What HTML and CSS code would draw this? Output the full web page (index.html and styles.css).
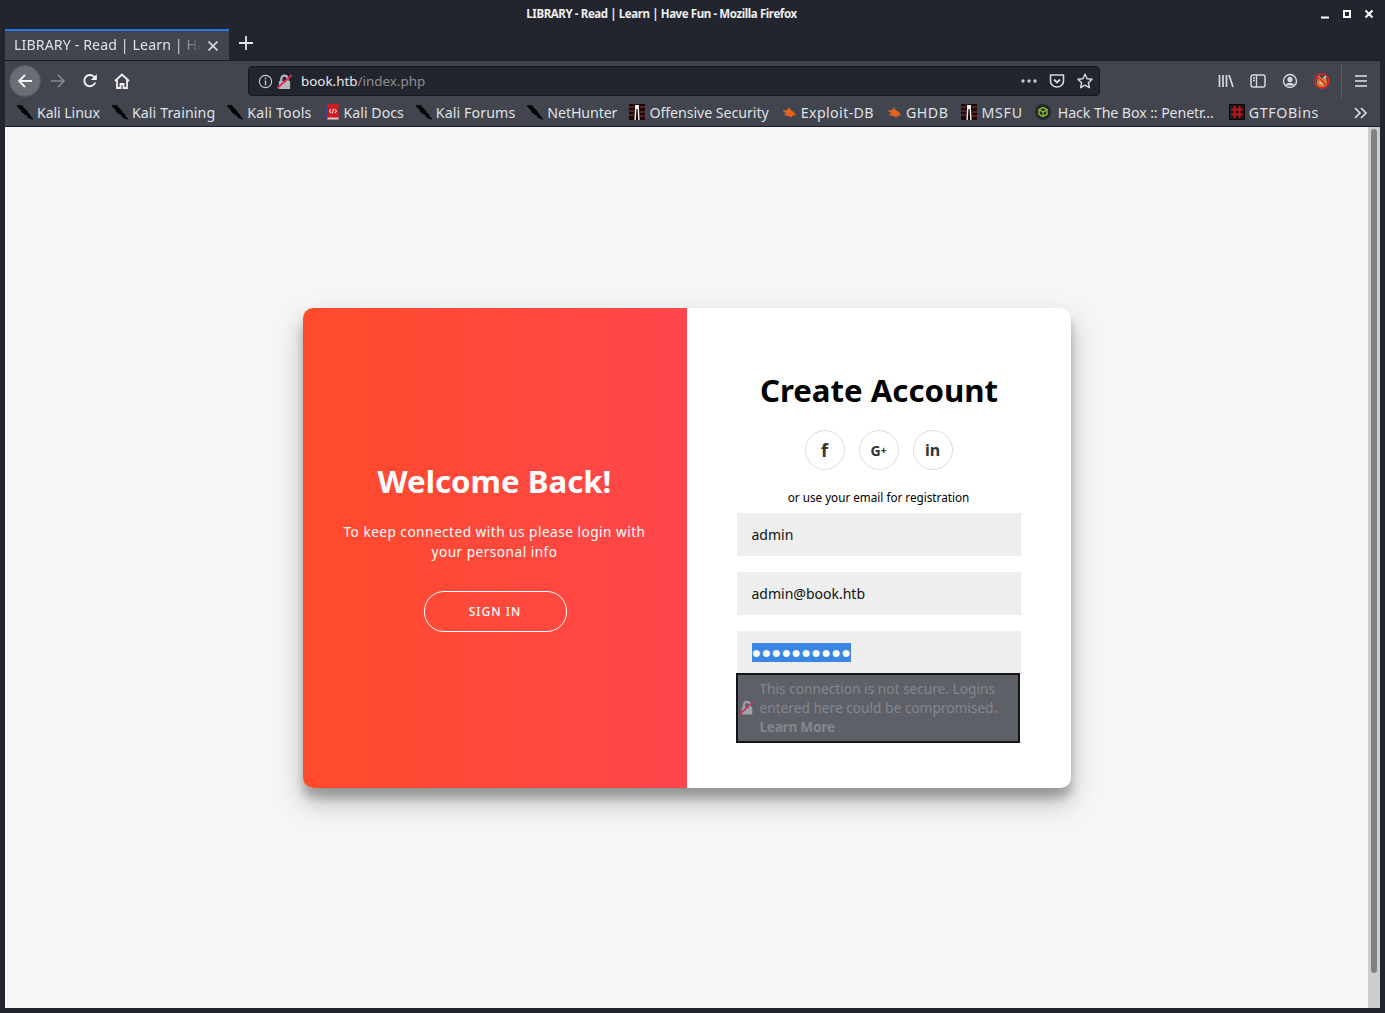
FILE: index.html
```html
<!DOCTYPE html>
<html lang="en">
<head>
<meta charset="utf-8">
<title>LIBRARY - Read | Learn | Have Fun</title>
<link rel="stylesheet" href="styles.css">
</head>
<body>
<svg class="defs" width="0" height="0" aria-hidden="true">
  <defs>
    <symbol id="dragon" viewBox="0 0 17 16">
      <path d="M0 2 L2 .6 L3 1.6 L5 .8 L6.8 3.2 L8.5 5.2 L10.500 6.6 L10.800 8.400 L13 10 L14.200 12.400 L17 15.600 L14.500 15 L11.600 13.600 L10.400 11.400 L8 10.400 L6.400 8.600 L5 8.200 L4.600 5.800 L2.600 4.600 L1.600 2.600 Z" fill="#050505" stroke="#050505" stroke-width=".8" stroke-linejoin="round"/>
    </symbol>
    <symbol id="bug" viewBox="0 0 16 16">
      <path d="M2 6.500 L6 6 L8 3.600 L9.800 6 L13 8 L14.800 11.600 L12 11.400 L10.400 13.600 L7.400 12 L4.600 11.400 L4.600 9 Z" fill="#e8601c"/>
      <path d="M2 6.500L5 8M3 11l3-1M7 3.600l2 3" stroke="#a8704a" stroke-width=".9"/>
    </symbol>
    <symbol id="offsec" viewBox="0 0 16 16">
      <rect width="16" height="16" fill="#1b0808"/>
      <path d="M0 3h5M0 7h5M0 11h5M11 3h5M11 8h5M11 12h5" stroke="#6d2a2a" stroke-width="1.300"/>
      <path d="M6 1h4v3l.6 12H9.200L8.600 5H7.400L6.800 16H5.400L6 4Z" fill="#f1eeee"/>
    </symbol>
    <symbol id="nolock" viewBox="0 0 16 16">
      <path d="M2 7.500h12V16H2Z" fill="#b7b8bd"/>
      <path d="M4.600 8V5a3.400 3.400 0 0 1 6.800 0V8" fill="none" stroke="#b7b8bd" stroke-width="2.400"/>
      <path d="M0 15.200 L16 1" stroke="#ea2351" stroke-width="2"/>
    </symbol>
  </defs>
</svg>

<div class="window">
  <header class="titlebar">
    <span class="title-text">LIBRARY - Read | Learn | Have Fun - Mozilla Firefox</span>
    <div class="wm-buttons">
      <svg class="wm" viewBox="0 0 10 10"><path d="M1 8.500h8" stroke="#fff" stroke-width="2"/></svg>
      <svg class="wm" viewBox="0 0 10 10"><path d="M2 2h6v6H2Z" fill="none" stroke="#fff" stroke-width="2"/></svg>
      <svg class="wm" viewBox="0 0 10 10"><path d="M1.500 1.500l7 7M8.500 1.500l-7 7" stroke="#fff" stroke-width="2"/></svg>
    </div>
  </header>

  <div class="tabbar">
    <div class="tab">
      <span class="tab-label">LIBRARY - Read | Learn | Have Fun</span>
      <svg class="tab-close" viewBox="0 0 10 10"><path d="M0.500 0.500l9 9M9.500 0.500l-9 9" stroke="#d9dade" stroke-width="1.600"/></svg>
    </div>
    <svg class="new-tab" viewBox="0 0 14 14"><path d="M7 0v14M0 7h14" stroke="#e6e7ea" stroke-width="1.800"/></svg>
  </div>

  <nav class="navbar">
    <div class="back-btn">
      <svg class="ico16" viewBox="0 0 16 16"><path d="M15 8H2M8 2L2 8l6 6" fill="none" stroke="#f4f4f6" stroke-width="1.800"/></svg>
    </div>
    <svg class="ico16 fwd" viewBox="0 0 16 16"><path d="M1 8h13M8 2l6 6-6 6" fill="none" stroke="#85878e" stroke-width="1.600"/></svg>
    <svg class="ico16 reload" viewBox="0 0 16 16"><path d="M13.200 9.500A5.600 5.600 0 1 1 11.800 3.600L14 6" fill="none" stroke="#f0f0f3" stroke-width="1.900"/><path d="M14.800 1v6h-6Z" fill="#f0f0f3"/></svg>
    <svg class="ico16 home" viewBox="0 0 16 16"><path d="M1 8l7-6.500L15 8M3 6.500V15h3.500v-4h3v4H13V6.500" fill="none" stroke="#f0f0f3" stroke-width="1.800"/></svg>
    <div class="urlbar">
      <svg class="ico-info" viewBox="0 0 16 16"><circle cx="8" cy="8" r="6.500" fill="none" stroke="#c9cacf" stroke-width="1.200"/><path d="M8 7v5M8 4v1.600" stroke="#c9cacf" stroke-width="1.500"/></svg>
      <svg class="ico-lock"><use href="#nolock"/></svg>
      <span class="url"><span class="url-host">book.htb</span><span class="url-path">/index.php</span></span>
      <svg class="url-dots" viewBox="0 0 16 4"><circle cx="2" cy="2" r="1.700" fill="#c9cacf"/><circle cx="8" cy="2" r="1.700" fill="#c9cacf"/><circle cx="14" cy="2" r="1.700" fill="#c9cacf"/></svg>
      <svg class="ico16 pocket" viewBox="0 0 16 16"><path d="M1.500 2h13v6a6.500 6 0 0 1-13 0Z" fill="none" stroke="#d7d8dc" stroke-width="1.600" stroke-linejoin="round"/><path d="M5 6.500l3 3 3-3" fill="none" stroke="#d7d8dc" stroke-width="1.800"/></svg>
      <svg class="ico16 star" viewBox="0 0 16 16"><path d="M8 1.200l2.100 4.500 4.900.6-3.600 3.400.9 4.900L8 12.200l-4.300 2.400.9-4.900L1 6.300l4.900-.6Z" fill="none" stroke="#d7d8dc" stroke-width="1.500" stroke-linejoin="round"/></svg>
    </div>
    <div class="nav-right">
      <svg class="ico16" viewBox="0 0 16 16"><path d="M1.500 2v12M5 2v12M8.500 2v12M11 2l4 12" fill="none" stroke="#d7d8dc" stroke-width="1.700"/></svg>
      <svg class="ico16" viewBox="0 0 16 16"><rect x="1" y="2" width="14" height="12" rx="2" fill="none" stroke="#d7d8dc" stroke-width="1.500"/><path d="M6.500 2v12M3 5h2M3 7.500h2" stroke="#d7d8dc" stroke-width="1.300"/></svg>
      <svg class="ico16" viewBox="0 0 16 16"><circle cx="8" cy="8" r="6.500" fill="none" stroke="#d7d8dc" stroke-width="1.400"/><circle cx="8" cy="6.400" r="2.600" fill="#d7d8dc"/><path d="M3.500 12.500a4.600 3.600 0 0 1 9 0Z" fill="#d7d8dc"/></svg>
      <svg class="ico16" viewBox="0 0 16 16"><path d="M3 7l2.500-4 2 2.500 4-2 1.500 4.500v4L10 14.500H6L3 12Z" fill="#d47f36"/><path d="M4 3.500l2 2M12 3l-2 2" stroke="#f0ece6" stroke-width="1.400"/><path d="M5.500 8.500l3 3" stroke="#f1d28a" stroke-width="1.500"/><circle cx="8" cy="8" r="6.900" fill="none" stroke="#e3262e" stroke-width="1.500"/><path d="M3 3l10 10" stroke="#e3262e" stroke-width="1.500"/></svg>
      <span class="nav-sep"></span>
      <svg class="ico16" viewBox="0 0 16 16"><path d="M2 3h12M2 8h12M2 13h12" stroke="#e2e3e6" stroke-width="1.700"/></svg>
    </div>
  </nav>

  <div class="bookmarks">
    <span class="bm ls-n1"><svg class="bm-ico"><use href="#dragon"/></svg>Kali Linux</span>
    <span class="bm ls-1"><svg class="bm-ico"><use href="#dragon"/></svg>Kali Training</span>
    <span class="bm ls-2"><svg class="bm-ico"><use href="#dragon"/></svg>Kali Tools</span>
    <span class="bm"><svg class="bm-ico" viewBox="0 0 16 16"><rect x="1.500" y="0" width="13" height="15.500" fill="#cf1b20"/><rect x="1.500" y="0" width="2" height="15.500" fill="#34458c"/><rect x="3.500" y="13.500" width="11" height="2" fill="#d9c9c4"/><path d="M7 5L5.500 7 7 9M11 5l1.500 2L11 9M9.700 4.500L8.300 9.500" fill="none" stroke="#fff" stroke-width="1"/></svg>Kali Docs</span>
    <span class="bm ls-1"><svg class="bm-ico"><use href="#dragon"/></svg>Kali Forums</span>
    <span class="bm ls-n1"><svg class="bm-ico"><use href="#dragon"/></svg>NetHunter</span>
    <span class="bm ls-n05"><svg class="bm-ico"><use href="#offsec"/></svg>Offensive Security</span>
    <span class="bm ls-4"><svg class="bm-ico"><use href="#bug"/></svg>Exploit-DB</span>
    <span class="bm ls-5"><svg class="bm-ico"><use href="#bug"/></svg>GHDB</span>
    <span class="bm ls-7 bm-msfu"><svg class="bm-ico"><use href="#offsec"/></svg>MSFU</span>
    <span class="bm bm-wide ls-n1"><svg class="bm-ico" viewBox="0 0 16 16"><circle cx="8" cy="8" r="8" fill="#1f2a2e"/><path d="M8 3.500l4 2.200v4.600l-4 2.200-4-2.200V5.700Z" fill="none" stroke="#9fcb1e" stroke-width="1.300"/><path d="M4.500 6L8 8l3.500-2M8 8v4.200" fill="none" stroke="#9fcb1e" stroke-width="1.100"/></svg>Hack The Box :: Penetr…</span>
    <span class="bm ls-6 bm-gtfo"><svg class="bm-ico" viewBox="0 0 16 16"><rect x="0.500" y="0.500" width="15" height="15" fill="#17181b" stroke="#05060a"/><path d="M5.500 2v12M10.500 2v12M2 5.500h12M2 10.500h12" stroke="#bb1717" stroke-width="2"/></svg>GTFOBins</span>
    <svg class="bm-more" viewBox="0 0 14 12"><path d="M1 1l5 5-5 5M7 1l5 5-5 5" fill="none" stroke="#e2e3e6" stroke-width="1.600"/></svg>
  </div>

  <div class="content-row">
    <main class="viewport">
      <section class="card">
        <div class="panel-left">
          <h1 class="h-welcome">Welcome Back!</h1>
          <p class="lead">To keep connected with us please login with your personal info</p>
          <button class="ghost-btn" type="button">SIGN IN</button>
        </div>
        <div class="panel-right">
          <h1 class="h-create">Create Account</h1>
          <div class="socials">
            <span class="social f">f</span>
            <span class="social g">G<small>+</small></span>
            <span class="social in">in</span>
          </div>
          <p class="or-line">or use your email for registration</p>
          <div class="field">admin</div>
          <div class="field">admin@book.htb</div>
          <div class="field field-pass"><span class="selected">●●●●●●●●●●</span></div>
          <div class="insecure">
            <svg class="insecure-ico"><use href="#nolock"/></svg>
            <div class="insecure-text">This connection is not secure. Logins entered here could be compromised. <b>Learn More</b></div>
          </div>
        </div>
      </section>
    </main>
    <div class="scrollbar"><div class="thumb"></div></div>
  </div>
</div>
</body>
</html>
```

FILE: styles.css
```css
* { box-sizing: border-box; }
html, body { margin: 0; padding: 0; height: 100%; overflow: hidden; background: #23252e; }
.defs { position: absolute; }
.window {
  height: 1013px; display: flex; flex-direction: column;
  font-family: "Noto Sans", "Open Sans", sans-serif; color: #eceef1;
  background: #23252e; padding: 0 5px 5px 5px;
}
.titlebar { height: 29px; flex: none; display: flex; align-items: center; justify-content: center; margin: 0 -5px; padding-bottom: 2px; position: relative; }
.title-text { font-size: 11.5px; font-weight: 700; color: #eef0f3; transform: translateX(-31px); letter-spacing: -0.4px; }
.wm-buttons { position: absolute; right: 11px; top: 9px; display: flex; gap: 12px; }
.wm { width: 10px; height: 10px; }

.tabbar { height: 31px; flex: none; display: flex; align-items: stretch; }
.tab {
  width: 224px; background: #42454e; border-top: 2px solid #2a76e8;
  display: flex; align-items: center; padding: 0 11px 3px 9px; font-size: 14.2px; letter-spacing: 0.1px;
}
.tab-label {
  flex: 1; white-space: nowrap; overflow: hidden; color: #dfe1e5;
  -webkit-mask-image: linear-gradient(to right, #000 85%, transparent);
  mask-image: linear-gradient(to right, #000 85%, transparent);
}
.tab-close { width: 10px; height: 10px; margin: 3px 0 0 6px; }
.new-tab { width: 14px; height: 14px; margin: 7px 0 0 10px; }

.navbar { height: 38px; flex: none; background: #42454e; border-top: 1px solid #1b1c23; display: flex; align-items: center; padding: 3px 0 0 4px; }
.back-btn { width: 32px; height: 32px; border-radius: 50%; background: #6b6d74; border: 1px solid #55575e; display: flex; align-items: center; justify-content: center; }
.ico16 { width: 16px; height: 16px; flex: none; }
.fwd { margin-left: 9px; }
.reload { margin-left: 16px; }
.home { margin-left: 16px; }
.urlbar {
  width: 852px; height: 30px; margin-left: 118px; background: #23252e; border: 1px solid #17181e;
  border-radius: 4px; display: flex; align-items: center; padding: 0 6px 0 9px; flex: none;
}
.ico-info { width: 15px; height: 15px; flex: none; }
.ico-lock { width: 15px; height: 15px; margin-left: 4px; flex: none; }
.url { font-size: 13.4px; margin-left: 9px; flex: 1; white-space: nowrap; }
.url-host { color: #e6e8ec; }
.url-path { color: #8d8f96; }
.url-dots { width: 16px; height: 4px; flex: none; }
.pocket { margin-left: 12px; }
.star { margin-left: 12px; }
.nav-right { flex: 1; display: flex; align-items: center; justify-content: flex-end; gap: 16px; padding-right: 11px; }
.nav-sep { width: 1px; height: 34px; background: #5d5f66; margin: 0 -5px; }

.bookmarks { height: 29px; flex: none; background: #42454e; display: flex; align-items: center; padding: 0 0 0 12px; gap: 12px; font-size: 14.2px; position: relative; border-bottom: 1px solid #1b1c23; }
.bm { display: inline-flex; align-items: center; color: #dfe1e5; white-space: nowrap; gap: 4px; }
.bm-wide { gap: 7px; }
.bm-msfu { margin-left: 1px; }
.bm-gtfo { margin-left: 3px; }
.ls-n1 { letter-spacing: -0.1px; }
.ls-n05 { letter-spacing: -0.05px; }
.ls-1 { letter-spacing: 0.1px; }
.ls-2 { letter-spacing: 0.2px; }
.ls-4 { letter-spacing: 0.4px; }
.ls-5 { letter-spacing: 0.5px; }
.ls-6 { letter-spacing: 0.65px; }
.ls-7 { letter-spacing: 0.75px; }
.bm-ico { width: 16px; height: 16px; flex: none; }
.bm-more { width: 14px; height: 12px; position: absolute; right: 12px; top: 9px; }

.content-row { flex: 1; display: flex; min-height: 0; }
.viewport { flex: 1; background: #f6f5f7; padding-top: 181px; display: flex; justify-content: center; align-items: flex-start; }
.scrollbar { width: 12px; flex: none; background: #cdcdcd; padding: 2px 3px 0; }
.thumb { height: 844px; background: #7f8284; border-radius: 3px; }

.card {
  width: 768px; height: 480px; display: flex; background: #fff; border-radius: 10px;
  box-shadow: 0 14px 28px rgba(0,0,0,.25), 0 10px 10px rgba(0,0,0,.22);
  position: relative; font-family: "Noto Sans", sans-serif; color: #000;
}
.panel-left {
  width: 384px; border-radius: 10px 0 0 10px; color: #fff; text-align: center;
  background: linear-gradient(to right, #ff4b2b, #ff464c);
  display: flex; flex-direction: column; align-items: center; justify-content: center; padding: 0 30px 3px;
}
.h-welcome { font-size: 31.2px; line-height: 38px; margin: 0; font-weight: 700; }
.lead { font-size: 13.6px; line-height: 20px; letter-spacing: .5px; margin: 22px 0 29px; font-weight: 400; }
.ghost-btn {
  width: 143px; height: 41px; margin-left: 1px; border: 1px solid #fff; border-radius: 20px; background: transparent; color: #fff;
  font: 500 12px "Noto Sans", sans-serif; letter-spacing: 1px;
}
.panel-right { flex: 1; padding: 63px 50px 0; display: flex; flex-direction: column; align-items: stretch; text-align: center; position: relative; }
.h-create { font-size: 31.2px; line-height: 38px; margin: 0 0 0 1px; font-weight: 700; }
.socials { display: flex; justify-content: center; gap: 14px; margin-top: 21px; }
.social { width: 40px; height: 40px; border: 1px solid #ddd; border-radius: 50%; display: flex; align-items: center; justify-content: center; font-weight: 700; font-size: 16px; color: #333; }
.f { font-size: 18px; }
.social small { font-size: 10px; }
.g { font-size: 14px; }
.or-line { font-size: 11.7px; line-height: 16px; margin: 19px 0 8px; }
.field { height: 43px; background: #eee; margin-bottom: 16px; padding: 0 15px; display: flex; align-items: center; font-size: 14px; color: #111; }
.field-pass { margin-bottom: 0; }
.selected { background: #3b85e4; color: #fff; font-size: 16px; line-height: 18px; height: 19px; letter-spacing: 0.3px; display: inline-block; white-space: nowrap; text-align: left; }
.insecure {
  position: absolute; left: 49px; top: 365px; width: 284px; height: 70px; padding-bottom: 2px;
  background: #5e6068; border: 2px solid #14151b; display: flex; align-items: center; text-align: left;
}
.insecure-ico { width: 14px; height: 15px; margin-left: 2px; flex: none; opacity: .75; }
.insecure-text { font-size: 13.7px; line-height: 19px; color: #85868d; margin-left: 6px; }
.insecure-text b { letter-spacing: -0.3px; }
```
